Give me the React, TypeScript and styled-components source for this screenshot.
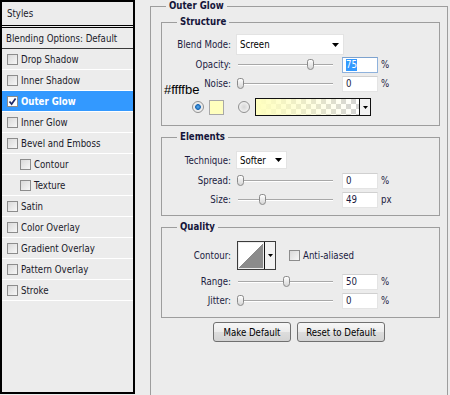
import React from 'react';
import styled, { createGlobalStyle } from 'styled-components';

const GlobalStyle = createGlobalStyle`
  html, body {
    margin: 0;
    padding: 0;
    background: #ececec;
  }
  body {
    font-family: "DejaVu Sans Condensed", "DejaVu Sans", sans-serif;
    font-size: 9.6px;
    color: #1b1b3f;
  }
`;

const styleItems = [
  { name: 'Drop Shadow' },
  { name: 'Inner Shadow' },
  { name: 'Outer Glow', active: true },
  { name: 'Inner Glow' },
  { name: 'Bevel and Emboss' },
  { name: 'Contour', sub: true },
  { name: 'Texture', sub: true },
  { name: 'Satin' },
  { name: 'Color Overlay' },
  { name: 'Gradient Overlay' },
  { name: 'Pattern Overlay' },
  { name: 'Stroke' },
];

const Arrow = () => (
  <svg width="7" height="4" viewBox="0 0 7 4">
    <path d="M0 0 H7 L3.5 4 Z" fill="#000" />
  </svg>
);

const Slider = ({ pos }: { pos: number }) => (
  <Track>
    <Thumb style={{ left: pos }} />
  </Track>
);

const SliderRow = ({
  label,
  pos,
  value,
  unit,
  selected,
}: {
  label: string;
  pos: number;
  value: string;
  unit: string;
  selected?: boolean;
}) => (
  <Row $h={19}>
    <Label>{label}</Label>
    <Slider pos={pos} />
    <ValueBox $focused={selected}>
      {selected ? <Selection>{value}</Selection> : value}
    </ValueBox>
    <Unit>{unit}</Unit>
  </Row>
);

const App = () => {
  return (
    <Window>
      <GlobalStyle />
      <StyleList>
        <ListHeader>Styles</ListHeader>
        <BlendingRow>Blending Options: Default</BlendingRow>
        {styleItems.map((item) => (
          <StyleItem key={item.name} $active={item.active} $sub={item.sub}>
            <Checkbox $checked={item.active}>
              {item.active && (
                <svg width="9" height="9" viewBox="0 0 9 9">
                  <path d="M1.5 4.5 L3.6 7 L7.6 1.5" stroke="#1d2a6b" strokeWidth="1.7" fill="none" />
                </svg>
              )}
            </Checkbox>
            {item.name}
          </StyleItem>
        ))}
      </StyleList>

      <Panel>
        <Legend>Outer Glow</Legend>

        <Group $top={4} $bottom={4}>
          <Legend>Structure</Legend>
          <Row $h={21} $mt={6}>
            <Label>Blend Mode:</Label>
            <Select $w={108} $hgt={21}>
              Screen
              <Arrow />
            </Select>
          </Row>
          <SliderRow label="Opacity:" pos={69} value="75" unit="%" selected />
          <SliderRow label="Noise:" pos={-1} value="0" unit="%" />
          <ColorRow>
            <HexNote>#ffffbe</HexNote>
            <Radio $on />
            <Swatch />
            <Radio $ml={14} />
            <GradientPicker>
              <GradientFill />
              <PickerButton>
                <Arrow />
              </PickerButton>
            </GradientPicker>
          </ColorRow>
        </Group>

        <Group $top={5} $bottom={6}>
          <Legend>Elements</Legend>
          <Row $h={22} $mt={6}>
            <Label>Technique:</Label>
            <Select $w={51} $hgt={18}>
              Softer
              <Arrow />
            </Select>
          </Row>
          <SliderRow label="Spread:" pos={-1} value="0" unit="%" />
          <SliderRow label="Size:" pos={21} value="49" unit="px" />
        </Group>

        <Group $top={5} $bottom={7}>
          <Legend>Quality</Legend>
          <Row $h={33} $mt={6}>
            <Label>Contour:</Label>
            <ContourPicker>
              <ContourCurve />
              <PickerButton>
                <Arrow />
              </PickerButton>
            </ContourPicker>
            <Checkbox $offset={13} />
            <CheckLabel>Anti-aliased</CheckLabel>
          </Row>
          <SliderRow label="Range:" pos={45} value="50" unit="%" />
          <SliderRow label="Jitter:" pos={-1} value="0" unit="%" />
        </Group>

        <ButtonBar>
          <Button $w={78}>Make Default</Button>
          <Button $w={88}>Reset to Default</Button>
        </ButtonBar>
      </Panel>
    </Window>
  );
};

const Window = styled.div`
  display: flex;
  align-items: flex-start;
  width: 450px;
  height: 395px;
  overflow: hidden;
  background: #ececec;
`;

const StyleList = styled.ul`
  box-sizing: border-box;
  width: 135px;
  height: 394px;
  margin: 0;
  padding: 0;
  list-style: none;
  border: 2px solid #000;
  display: flex;
  flex-direction: column;
  flex-shrink: 0;
  color: #1a1a2a;
`;

const ListHeader = styled.li`
  box-sizing: border-box;
  height: 26px;
  padding-left: 5px;
  display: flex;
  align-items: center;
  border-bottom: 3px double #000;
`;

const BlendingRow = styled.li`
  box-sizing: border-box;
  height: 21px;
  padding-left: 4px;
  display: flex;
  align-items: center;
  border-bottom: 1px solid #3a3a3a;
`;

const StyleItem = styled.li<{ $active?: boolean; $sub?: boolean }>`
  box-sizing: border-box;
  height: 21px;
  padding-left: ${(p) => (p.$sub ? 18 : 5)}px;
  display: flex;
  align-items: center;
  gap: 3px;
  border-bottom: 1px solid #fff;
  background: ${(p) => (p.$active ? '#3399ff' : 'transparent')};
  color: ${(p) => (p.$active ? '#fff' : 'inherit')};
  font-weight: ${(p) => (p.$active ? 'bold' : 'normal')};
`;

const Checkbox = styled.span<{ $checked?: boolean; $offset?: number }>`
  box-sizing: border-box;
  width: 11px;
  height: 11px;
  margin-left: ${(p) => p.$offset ?? 0}px;
  flex-shrink: 0;
  border: 1px solid #8c8c8c;
  background: ${(p) =>
    p.$checked ? '#fff' : 'linear-gradient(135deg, #d9d9d9, #f7f7f7)'};
  display: flex;
  align-items: center;
  justify-content: center;
`;

const CheckLabel = styled.span`
  margin-left: 3px;
`;

const Panel = styled.fieldset`
  box-sizing: border-box;
  width: 298px;
  height: 410px;
  min-width: 0;
  margin: 0 0 0 15px;
  padding: 0;
  border: 1px solid #9d9d9d;
  border-bottom: none;
  flex-shrink: 0;
`;

const Legend = styled.legend`
  margin-left: 15px;
  padding: 0 3px;
  line-height: 12px;
  font-weight: bold;
  color: #15153a;
`;

const Group = styled.fieldset<{ $top: number; $bottom: number }>`
  min-width: 0;
  margin: ${(p) => p.$top}px 7px 0 10px;
  padding: 0 0 ${(p) => p.$bottom}px;
  border: 1px solid #9d9d9d;
`;

const Row = styled.div<{ $h: number; $mt?: number }>`
  display: flex;
  align-items: center;
  height: ${(p) => p.$h}px;
  margin-top: ${(p) => p.$mt ?? 0}px;
`;

const Label = styled.span`
  box-sizing: border-box;
  width: 74px;
  padding-right: 5px;
  text-align: right;
  flex-shrink: 0;
`;

const Select = styled.div<{ $w: number; $hgt: number }>`
  box-sizing: border-box;
  width: ${(p) => p.$w}px;
  height: ${(p) => p.$hgt}px;
  padding: 0 4px 0 3px;
  background: #fff;
  border: 1px solid #e3e3e3;
  display: flex;
  align-items: center;
  justify-content: space-between;
  color: #000;
`;

const Track = styled.div`
  position: relative;
  width: 95px;
  height: 11px;
  margin-left: 2px;
  flex-shrink: 0;

  &::before {
    content: '';
    position: absolute;
    left: 0;
    right: 0;
    top: 5px;
    height: 1px;
    background: #a8a8a8;
    box-shadow: 0 1px 0 #fff;
  }
`;

const Thumb = styled.span`
  position: absolute;
  top: 0;
  box-sizing: border-box;
  width: 7px;
  height: 11px;
  border: 1px solid #8a8a8a;
  border-radius: 3px 3px 4px 4px;
  background: linear-gradient(#fefefe, #d6d6d6);
`;

const ValueBox = styled.div<{ $focused?: boolean }>`
  box-sizing: border-box;
  width: 36px;
  height: 16px;
  margin-left: 9px;
  padding-left: 3px;
  display: flex;
  align-items: center;
  background: #fff;
  border: 1px solid ${(p) => (p.$focused ? '#8fb2dc' : '#e4e4e4')};
  border-top-color: ${(p) => (p.$focused ? '#7da2ce' : '#d0d0d0')};
  color: #1b1b3f;
`;

const Selection = styled.span`
  background: #3399ff;
  color: #fff;
  line-height: 12px;
`;

const Unit = styled.span`
  margin-left: 3px;
`;

const ColorRow = styled.div`
  position: relative;
  display: flex;
  align-items: center;
  height: 28px;
  padding-left: 30px;
`;

const HexNote = styled.span`
  position: absolute;
  left: 2px;
  top: -11px;
  font-family: "Liberation Sans", Arial, sans-serif;
  font-size: 13px;
  line-height: 15px;
  color: #000;
`;

const Radio = styled.span<{ $on?: boolean; $ml?: number }>`
  box-sizing: border-box;
  width: 12px;
  height: 12px;
  margin-left: ${(p) => p.$ml ?? 0}px;
  border-radius: 50%;
  border: 1px solid #909090;
  background: ${(p) =>
    p.$on
      ? 'radial-gradient(circle, #5fb0f0 0, #1565b5 2.5px, #e8e8e8 3.2px, #f6f6f6 100%)'
      : 'radial-gradient(circle, #d6d6d6 0, #ececec 60%, #f8f8f8 100%)'};
  flex-shrink: 0;
`;

const Swatch = styled.span`
  box-sizing: border-box;
  width: 15px;
  height: 15px;
  margin-left: 5px;
  background: #ffffbe;
  border: 1px solid #a8a8a8;
`;

const GradientPicker = styled.div`
  box-sizing: border-box;
  width: 116px;
  height: 18px;
  margin-left: 5px;
  border: 1px solid #111;
  display: flex;
`;

const GradientFill = styled.div`
  flex: 1;
  background:
    linear-gradient(to right, #ffffbe, rgba(255, 255, 190, 0)),
    repeating-conic-gradient(#d4d4d4 0 25%, #fff 0 50%) 0 0 / 10px 10px;
`;

const PickerButton = styled.div`
  width: 10px;
  border-left: 1px solid #111;
  background: #f2f2f2;
  display: flex;
  align-items: center;
  justify-content: center;
  svg {
    width: 5px;
    height: 3px;
  }
`;

const ContourPicker = styled.div`
  box-sizing: border-box;
  width: 39px;
  height: 29px;
  margin-left: 1px;
  border: 1px solid #3c3c3c;
  display: flex;
`;

const ContourCurve = styled.div`
  flex: 1;
  margin: 1px;
  background: linear-gradient(to bottom right, #fff 50%, #8b8b8b 50%);
`;

const ButtonBar = styled.div`
  display: flex;
  justify-content: center;
  gap: 6px;
  margin-top: 4px;
`;

const Button = styled.button<{ $w: number }>`
  box-sizing: border-box;
  width: ${(p) => p.$w}px;
  height: 20px;
  padding: 0;
  font: inherit;
  color: #000;
  border: 1px solid #707070;
  border-radius: 3px;
  background: linear-gradient(#f7f7f7 0%, #ebebeb 50%, #dddddd 51%, #d3d3d3 100%);
`;

export default App;
